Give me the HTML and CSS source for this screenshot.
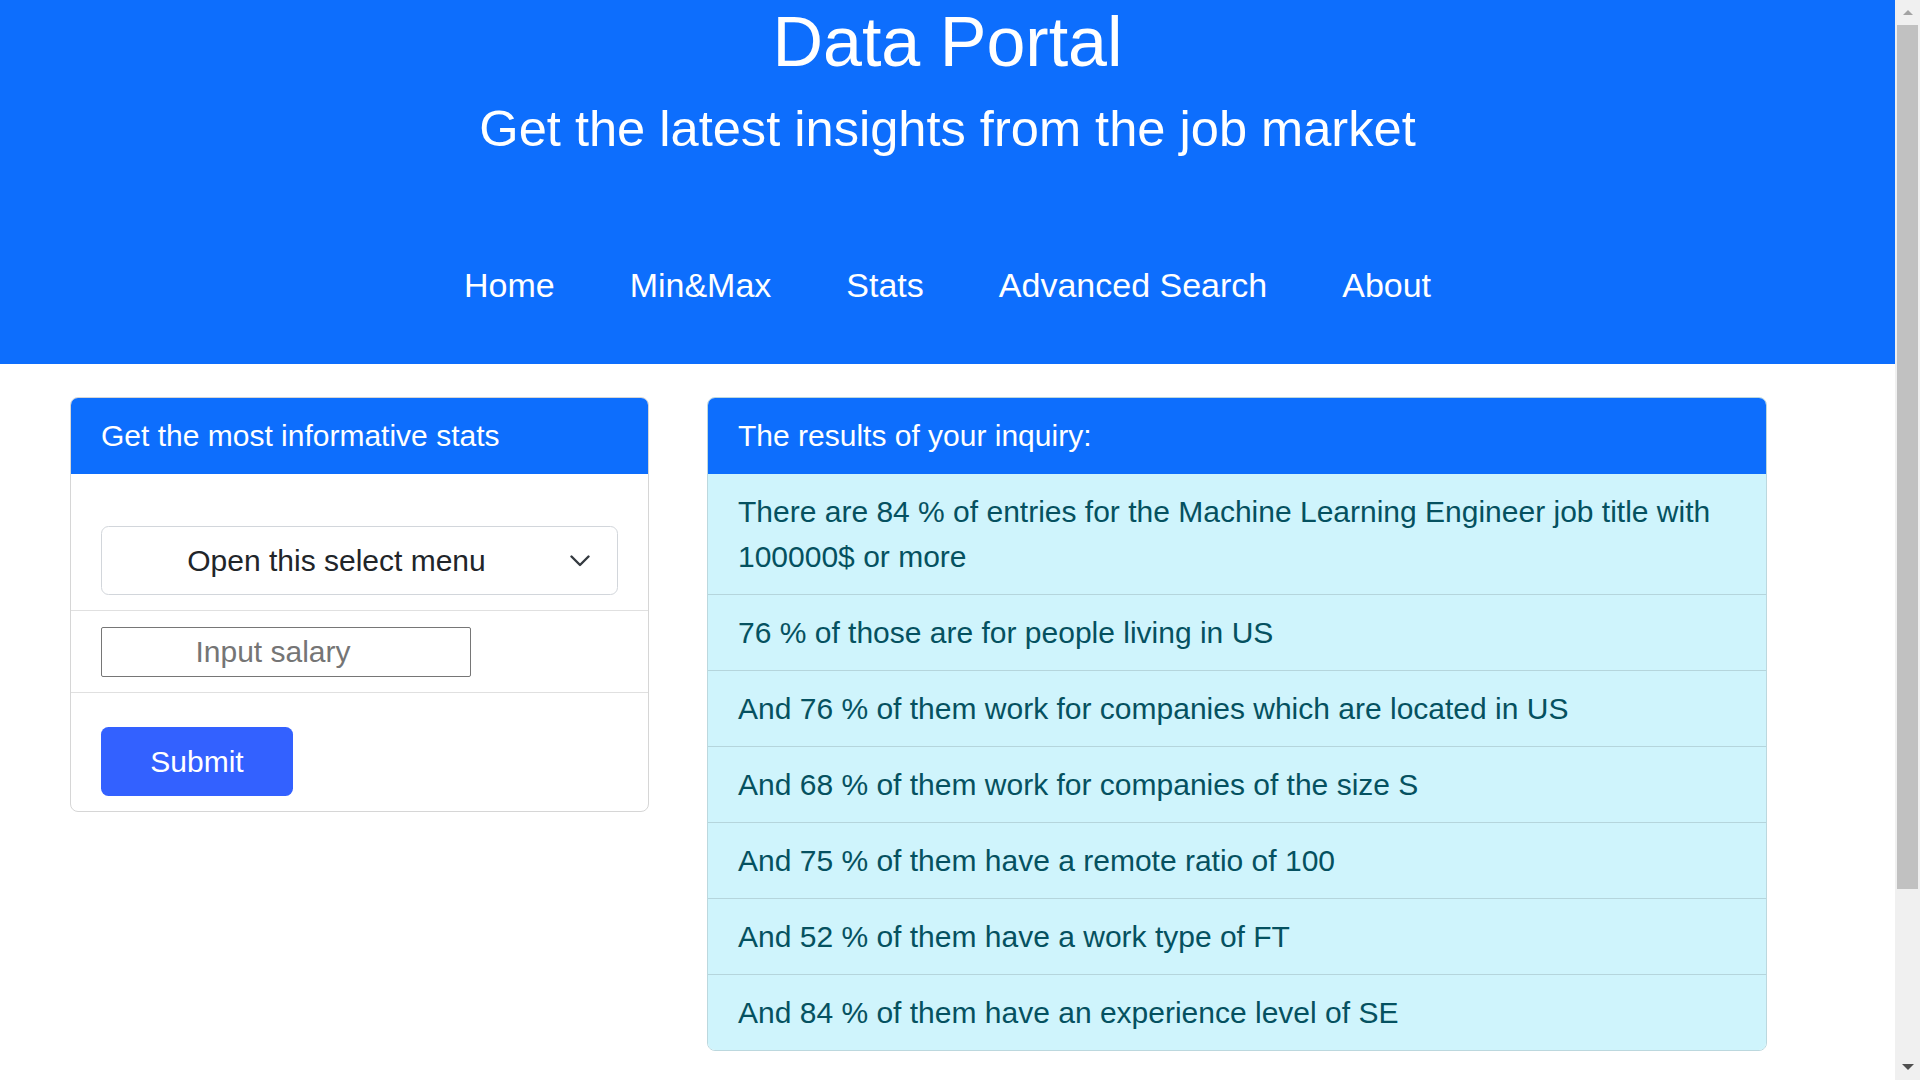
FILE: index.html
```html
<!DOCTYPE html>
<html lang="en">
<head>
<meta charset="utf-8">
<title>Data Portal</title>
<link rel="stylesheet" href="styles.css">
</head>
<body>
<div class="app">
  <div class="page">
    <header class="hero">
      <h1 class="title">Data Portal</h1>
      <h2 class="subtitle">Get the latest insights from the job market</h2>
      <nav class="nav">
        <a class="nav-link" href="#">Home</a>
        <a class="nav-link" href="#">Min&amp;Max</a>
        <a class="nav-link" href="#">Stats</a>
        <a class="nav-link" href="#">Advanced Search</a>
        <a class="nav-link" href="#">About</a>
      </nav>
    </header>
    <main class="content">
      <section class="card card-form">
        <div class="card-header">Get the most informative stats</div>
        <div class="card-list">
          <div class="item item-select">
            <div class="select">
              <span class="select-text">Open this select menu</span>
              <svg class="chevron" width="20" height="12" viewBox="0 0 20 12"><polyline points="1.5,1.5 10,10 18.5,1.5" fill="none" stroke="#343a40" stroke-width="2.4" stroke-linecap="round" stroke-linejoin="round"/></svg>
            </div>
          </div>
          <div class="item item-input">
            <input class="salary" type="text" placeholder="Input salary">
          </div>
          <div class="item item-button">
            <button class="submit" type="button">Submit</button>
          </div>
        </div>
      </section>
      <section class="card card-results">
        <div class="card-header">The results of your inquiry:</div>
        <ul class="results">
          <li class="result">There are 84 % of entries for the Machine Learning Engineer job title with 100000$ or more</li>
          <li class="result">76 % of those are for people living in US</li>
          <li class="result">And 76 % of them work for companies which are located in US</li>
          <li class="result">And 68 % of them work for companies of the size S</li>
          <li class="result">And 75 % of them have a remote ratio of 100</li>
          <li class="result">And 52 % of them have a work type of FT</li>
          <li class="result">And 84 % of them have an experience level of SE</li>
        </ul>
      </section>
    </main>
  </div>
  <div class="scrollbar">
    <div class="sb-up"><span class="tri-up"></span></div>
    <div class="sb-thumb"></div>
    <div class="sb-track"></div>
    <div class="sb-down"><span class="tri-down"></span></div>
  </div>
</div>
</body>
</html>
```
FILE: styles.css
```css
* { box-sizing: border-box; }

html, body {
  margin: 0;
  padding: 0;
  background: #ffffff;
}

body {
  font-family: "Liberation Sans", Arial, sans-serif;
  color: #212529;
}

.app {
  display: flex;
  height: 100vh;
  overflow: hidden;
}

.page {
  flex: 1;
  min-width: 0;
}

/* Header */
.hero {
  background: #0d6efd;
  color: #ffffff;
  text-align: center;
  height: 364px;
  padding-top: 0;
}

.title {
  margin: 0;
  font-size: 70px;
  line-height: 84px;
  font-weight: 400;
}

.subtitle {
  margin: 15px 0 0;
  font-size: 50.6px;
  line-height: 60px;
  font-weight: 400;
}

.nav {
  margin-top: 100px;
  display: flex;
  justify-content: center;
  gap: 75px;
}

.nav-link {
  color: #ffffff;
  text-decoration: none;
  font-size: 34px;
  line-height: 52.5px;
}

/* Content */
.content {
  display: flex;
  align-items: flex-start;
  gap: 58px;
  padding: 33px 0 0 70px;
}

.card {
  border: 1px solid #d6d6d6;
  border-radius: 8px;
  overflow: hidden;
  background: #ffffff;
}

.card-form { width: 579px; }

.card-results {
  width: 1060px;
  border-color: #bcd8de;
}

.card-header {
  background: #0d6efd;
  color: #ffffff;
  font-size: 30px;
  line-height: 36px;
  padding: 20px 30px 20px;
}

/* Form card */
.item {
  padding: 15px 30px;
  border-bottom: 1px solid #e0e0e0;
}

.item:last-child { border-bottom: none; }

.item-select { padding-top: 52px; }
.item-input { padding-top: 16px; }
.item-button { padding-top: 34px; }

.select {
  display: flex;
  align-items: center;
  gap: 14px;
  height: 69px;
  padding: 0 27px 0 15px;
  border: 1px solid #d2d6db;
  border-radius: 7.5px;
  background: #ffffff;
  font-size: 30px;
  color: #212529;
}

.select-text {
  flex: 1;
  text-align: center;
  line-height: 45px;
}

.chevron { display: block; flex: none; }

.salary {
  display: block;
  width: 370px;
  height: 50px;
  border: 1px solid #767676;
  border-radius: 2px;
  padding: 0 28px 0 2px;
  font-family: "Liberation Sans", Arial, sans-serif;
  font-size: 30px;
  text-align: center;
  color: #212529;
  background: #ffffff;
}

.salary::placeholder { color: #757575; }

.submit {
  display: block;
  width: 192px;
  height: 69px;
  border: none;
  border-radius: 7.5px;
  background: #3361ff;
  color: #ffffff;
  font-family: "Liberation Sans", Arial, sans-serif;
  font-size: 30px;
  padding: 0;
}

/* Results card */
.results {
  list-style: none;
  margin: 0;
  padding: 0;
}

.result {
  background: #cff4fc;
  color: #055160;
  font-size: 30px;
  line-height: 45px;
  padding: 15px 30px;
  border-bottom: 1px solid #b5d5dc;
}

.result:last-child { border-bottom: none; }

/* Scrollbar */
.scrollbar {
  flex: none;
  width: 25px;
  height: 100vh;
  background: #f0f0f0;
  display: flex;
  flex-direction: column;
  align-items: center;
}

.sb-up {
  height: 25px;
  padding-top: 10px;
}

.tri-up {
  display: block;
  width: 0;
  height: 0;
  border-left: 5.5px solid transparent;
  border-right: 5.5px solid transparent;
  border-bottom: 5px solid #a3a3a3;
}

.sb-thumb {
  width: 21px;
  height: 864px;
  background: #c1c1c1;
}

.sb-track { flex: 1; }

.sb-down {
  height: 25px;
  padding-top: 9px;
}

.tri-down {
  display: block;
  width: 0;
  height: 0;
  border-left: 6px solid transparent;
  border-right: 6px solid transparent;
  border-top: 6px solid #505050;
}
```
